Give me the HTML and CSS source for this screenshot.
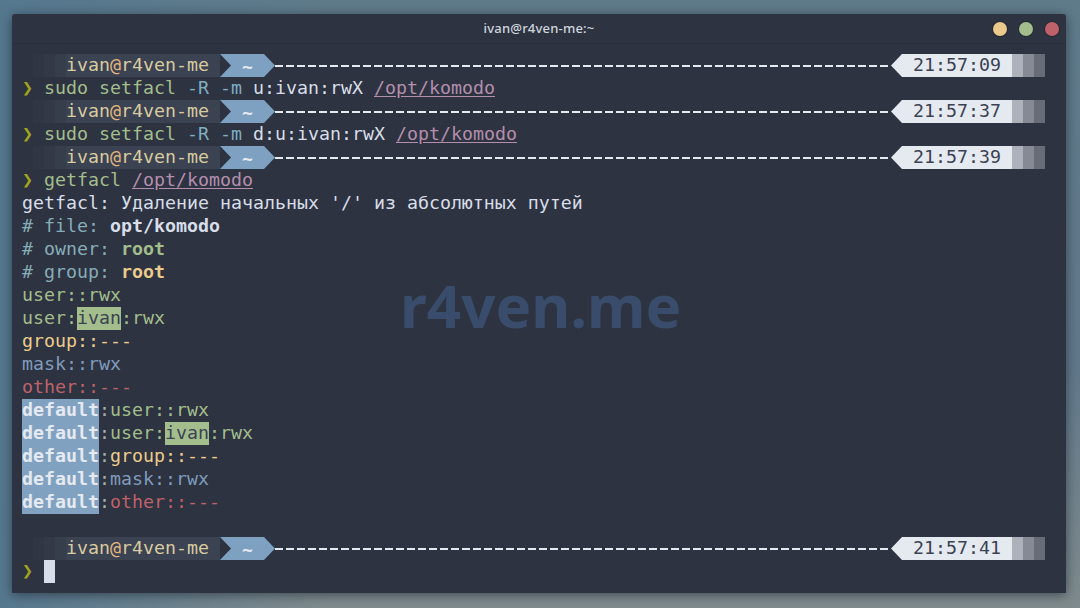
FILE: index.html
```html
<!DOCTYPE html>
<html lang="ru">
<head>
<meta charset="utf-8">
<title>ivan@r4ven-me:~</title>
<link rel="stylesheet" href="styles.css">
</head>
<body>
<main class="window">
  <header class="titlebar">
    <span class="title">ivan@r4ven-me:~</span>
    <div class="controls">
      <span class="dot dot-yellow"></span>
      <span class="dot dot-green"></span>
      <span class="dot dot-red"></span>
    </div>
  </header>
  <div class="watermark">r4ven.me</div>
  <div class="term">
    <div class="line banner"><span class="fade f1"></span><span class="fade f2"></span><span class="fade f3"></span><span class="user"><span class="u">ivan</span><span class="at">@</span><span class="u">r4ven-me</span></span><span class="dir"><span class="tilde">~</span></span><span class="rule"></span><span class="clock">21:57:09</span><span class="fade r1"></span><span class="fade r2"></span><span class="fade r3"></span></div>
    <div class="line"><span class="chev">❯</span> <span class="g">sudo</span> <span class="g">setfacl</span> <span class="b">-R</span> <span class="b">-m</span> <span class="w">u:ivan:rwX</span> <span class="path">/opt/komodo</span></div>
    <div class="line banner"><span class="fade f1"></span><span class="fade f2"></span><span class="fade f3"></span><span class="user"><span class="u">ivan</span><span class="at">@</span><span class="u">r4ven-me</span></span><span class="dir"><span class="tilde">~</span></span><span class="rule"></span><span class="clock">21:57:37</span><span class="fade r1"></span><span class="fade r2"></span><span class="fade r3"></span></div>
    <div class="line"><span class="chev">❯</span> <span class="g">sudo</span> <span class="g">setfacl</span> <span class="b">-R</span> <span class="b">-m</span> <span class="w">d:u:ivan:rwX</span> <span class="path">/opt/komodo</span></div>
    <div class="line banner"><span class="fade f1"></span><span class="fade f2"></span><span class="fade f3"></span><span class="user"><span class="u">ivan</span><span class="at">@</span><span class="u">r4ven-me</span></span><span class="dir"><span class="tilde">~</span></span><span class="rule"></span><span class="clock">21:57:39</span><span class="fade r1"></span><span class="fade r2"></span><span class="fade r3"></span></div>
    <div class="line"><span class="chev">❯</span> <span class="g">getfacl</span> <span class="path">/opt/komodo</span></div>
    <div class="line w">getfacl: Удаление начальных '/' из абсолютных путей</div>
    <div class="line"><span class="c"># file:</span> <strong class="w">opt/komodo</strong></div>
    <div class="line"><span class="c"># owner:</span> <strong class="g">root</strong></div>
    <div class="line"><span class="c"># group:</span> <strong class="y">root</strong></div>
    <div class="line g">user::rwx</div>
    <div class="line g">user:<span class="hl">ivan</span>:rwx</div>
    <div class="line y">group::---</div>
    <div class="line n">mask::rwx</div>
    <div class="line r">other::---</div>
    <div class="line g"><strong class="def">default</strong><span class="w2">:</span>user::rwx</div>
    <div class="line g"><strong class="def">default</strong><span class="w2">:</span>user:<span class="hl">ivan</span>:rwx</div>
    <div class="line y"><strong class="def">default</strong><span class="w2">:</span>group::---</div>
    <div class="line n"><strong class="def">default</strong><span class="w2">:</span>mask::rwx</div>
    <div class="line r"><strong class="def">default</strong><span class="w2">:</span>other::---</div>
    <div class="line"></div>
    <div class="line banner"><span class="fade f1"></span><span class="fade f2"></span><span class="fade f3"></span><span class="user"><span class="u">ivan</span><span class="at">@</span><span class="u">r4ven-me</span></span><span class="dir"><span class="tilde">~</span></span><span class="rule"></span><span class="clock">21:57:41</span><span class="fade r1"></span><span class="fade r2"></span><span class="fade r3"></span></div>
    <div class="line"><span class="chev">❯</span> <span class="cursor"></span></div>
  </div>
</main>
</body>
</html>
```
FILE: styles.css
```css
html, body {
  margin: 0;
  height: 100%;
}
body {
  box-sizing: border-box;
  height: 608px;
  padding: 14px 14px 15px 12px;
  overflow: hidden;
  background:
    linear-gradient(90deg, #56788f 0, rgba(86,120,143,0) 30%),
    linear-gradient(180deg, #5f7b8a 0, #61788a 60%, #7f8b8d 100%);
}
.window {
  position: relative;
  height: 579px;
  background: #2d3340;
  border-radius: 3px 3px 0 0;
  box-shadow: 0 2px 12px rgba(15, 22, 32, .55);
  overflow: hidden;
}
.titlebar {
  display: flex;
  align-items: center;
  justify-content: center;
  height: 29px;
  border-bottom: 1px solid #2a2f3a;
}
.title {
  font: 500 13px/1 "Noto Sans", sans-serif;
  color: #d0d5de;
  letter-spacing: .2px;
}
.controls {
  position: absolute;
  top: 8px;
  right: 7px;
  display: flex;
  gap: 12px;
}
.dot {
  width: 14px;
  height: 14px;
  border-radius: 50%;
  box-shadow: 0 0 0 1px #262a33;
}
.dot-yellow { background: #ebcb8b; }
.dot-green { background: #a3be8c; }
.dot-red { background: #bf616a; }
.watermark {
  position: absolute;
  top: 255px;
  left: 388px;
  font: 700 60px/1.2 "Noto Sans", sans-serif;
  color: #394c6b;
  white-space: nowrap;
}
.term {
  position: relative;
  padding: 10px 0 0 10px;
  font: 18.27px/21px "DejaVu Sans Mono", monospace;
  color: #d8dee9;
}
.line {
  height: 23px;
  white-space: pre;
}
.banner {
  display: flex;
  padding-left: 11px;
}
.fade {
  width: 11px;
  height: 23px;
}
.f1 { background: #303643; }
.f2 { background: #333946; }
.f3 { background: #373e4b; }
.r1 { background: #adb2ba; }
.r2 { background: #858a94; }
.r3 { background: #676c76; }
.user {
  box-sizing: border-box;
  width: 154px;
  padding-right: 11px;
  background: #3b4252;
}
.u { color: #d9cba0; }
.at { color: #e3b77d; }
.dir {
  display: flex;
  align-items: center;
  justify-content: center;
  width: 55px;
  height: 23px;
  background: #7ea0c1;
  clip-path: polygon(0 0, calc(100% - 11px) 0, 100% 50%, calc(100% - 11px) 100%, 0 100%, 11px 50%);
}
.tilde {
  color: #e5e9f0;
  font-weight: 700;
  font-size: 18px;
  line-height: 23px;
  padding-top: 1px;
}
.rule {
  width: 616px;
  height: 2px;
  margin-top: 11px;
  background: repeating-linear-gradient(90deg, #e5e9f0 0 8px, transparent 8px 11px);
}
.clock {
  box-sizing: border-box;
  width: 121px;
  padding-left: 22px;
  background: #e5e9f0;
  color: #3b4252;
  clip-path: polygon(11px 0, 100% 0, 100% 100%, 11px 100%, 0 50%);
}
.chev { color: #a3a31c; }
.g { color: #a3be8c; }
.b { color: #7faec0; }
.w { color: #d8dee9; }
.w2 { color: #a3b0a8; }
.c { color: #86acb8; }
.y { color: #ebcb8b; }
.n { color: #7f9bbd; }
.r { color: #bf616a; }
.path {
  color: #b48ead;
  text-decoration: underline;
  text-underline-offset: 2px;
}
.hl {
  display: inline-block;
  height: 23px;
  background: #a3be8c;
  color: #3b4252;
}
.def {
  display: inline-block;
  height: 23px;
  background: #81a1c1;
  color: #e5e9f0;
}
.cursor {
  display: inline-block;
  width: 11px;
  height: 23px;
  background: #d8dee9;
  vertical-align: top;
}
```
